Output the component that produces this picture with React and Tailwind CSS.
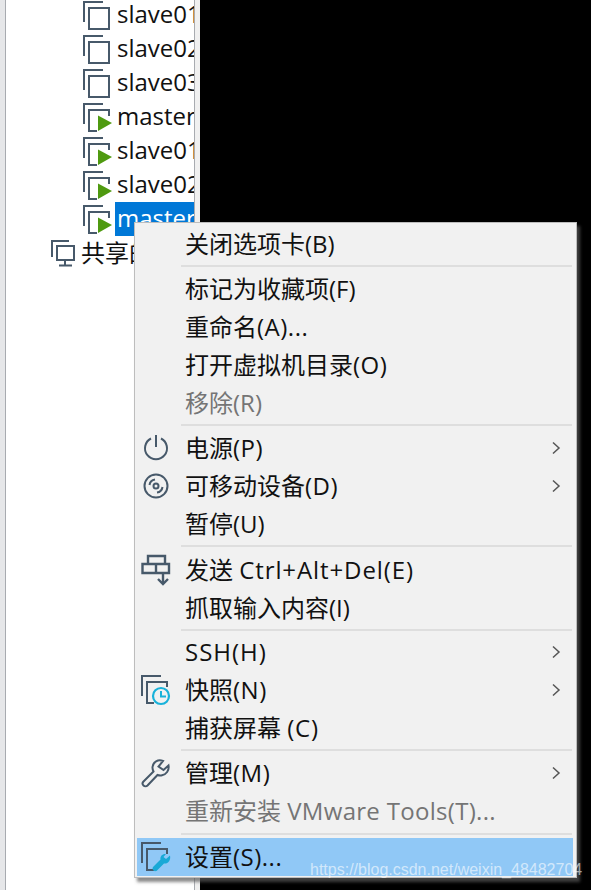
import React from "react";

const C = "#47596a";
const FONT = "font-['Open_Sans','Noto_Sans_CJK_SC',sans-serif]";

function VmIcon({ running }) {
  return (
    <svg width="30" height="32" viewBox="0 0 30 32" fill="none" className="shrink-0">
      <path d="M2 23V3H21" stroke={C} strokeWidth="2" />
      {running ? (
        <>
          <path d="M15 30H7V9H27V15" stroke={C} strokeWidth="2" />
          <path d="M16 14.5L30 22L16 30Z" fill="#4f9a10" />
        </>
      ) : (
        <path d="M7 9H27V30H7Z" stroke={C} strokeWidth="2" />
      )}
    </svg>
  );
}

function TreeRow({ name, running, selected }) {
  return (
    <div className="flex h-[34px] items-center pl-[76px] overflow-hidden">
      <VmIcon running={running} />
      <div className={`ml-[3px] flex-1 h-[34px] pl-[2px] leading-[31px] whitespace-nowrap overflow-hidden ${selected ? "bg-[#0078d7] text-white" : "text-[#111]"}`}>
        {name}
      </div>
    </div>
  );
}

function Chevron() {
  return (
    <svg width="10" height="14" viewBox="0 0 10 14" fill="none" className="absolute right-[12px] top-[12px]">
      <path d="M2 1.5L8 7L2 12.5" stroke="#555" strokeWidth="1.5" />
    </svg>
  );
}

function Item({ label, icon, arrow, disabled, active }) {
  return (
    <div className={`relative flex h-[38px] items-center whitespace-nowrap ${active ? "bg-[#90c8f6]" : ""} ${disabled ? "text-[#757575]" : "text-[#111]"}`}>
      <div className="flex w-[44px] shrink-0 items-center justify-center pr-[6px]">{icon}</div>
      <div className="pl-[4px] leading-[38px]">{label}</div>
      {arrow && <Chevron />}
    </div>
  );
}

function Sep({ cls }) {
  return <div className={`ml-[44px] mr-[1px] h-[2px] bg-[#dedede] ${cls}`} />;
}

function L({ children }) {
  return <span className="tracking-[0.5px]">{children}</span>;
}

const PowerIcon = (
  <svg width="28" height="28" viewBox="0 0 28 28" fill="none" stroke={C} strokeWidth="2">
    <path d="M9 4.5A11 11 0 1 0 19 4.5" />
    <path d="M14 1V13" />
  </svg>
);

const DiscIcon = (
  <svg width="28" height="28" viewBox="0 0 28 28" fill="none" stroke={C} strokeWidth="2">
    <circle cx="14" cy="14" r="11.5" />
    <circle cx="14" cy="14" r="2.5" />
    <path d="M7.5 13A6.5 6.5 0 0 1 13 7.5" />
    <path d="M20.5 15A6.5 6.5 0 0 1 15 20.5" />
  </svg>
);

const SendIcon = (
  <svg width="30" height="32" viewBox="0 0 30 32" fill="none" stroke={C} strokeWidth="2.4" className="-mt-[1px]">
    <path d="M7 10V2H24V10" />
    <path d="M1.5 10H28V19H1.5Z" />
    <path d="M15 10V19" />
    <path d="M22 19V30" />
    <path d="M17 25L22 30L27 25" />
  </svg>
);

const SnapshotIcon = (
  <svg width="32" height="32" viewBox="0 0 32 32" fill="none">
    <path d="M2 22V2H21" stroke={C} strokeWidth="2" />
    <path d="M14 29H7V8H27V13" stroke={C} strokeWidth="2" />
    <circle cx="21" cy="22" r="8" stroke="#19b2da" strokeWidth="2.2" fill="#f1f1f1" />
    <path d="M21 17V22.5H26" stroke="#19b2da" strokeWidth="2" />
  </svg>
);

const WrenchIcon = (
  <svg width="30" height="30" viewBox="0 0 30 30" fill="none" stroke={C} strokeWidth="2">
    <path d="M27.5 7.5L22.5 12L17.5 8.5L22 3C17 1 12 4 11.5 9C11.3 11 12 12.5 12.5 13.5L2.5 23.5C1 25 1.5 26.5 2.5 27.5C3.5 28.5 5.5 28.5 6.5 27.5L16.5 17C18 17.5 19.5 17.7 21 17.3C25 16.5 28.5 12.5 27.5 7.5Z" />
  </svg>
);

const SettingsIcon = (
  <svg width="32" height="32" viewBox="0 0 32 32" fill="none">
    <path d="M2 22V2H21" stroke={C} strokeWidth="2" />
    <path d="M14 29H7V8H27V13" stroke={C} strokeWidth="2" />
    <path d="M30 14.5L26 18L23.5 16L26 13C22.5 12.5 20 15 20.5 18.5L13.5 25.5C12 27 12.5 28.5 13.5 29.5C14.5 30.5 16.5 30.5 17.5 29L24 22.5C28 23 31 19.5 30 14.5Z" fill="#19a9d6" />
  </svg>
);

export default function App() {
  return (
    <div className={`relative flex h-[890px] w-[591px] overflow-hidden bg-black text-[24px] ${FONT}`}>
      <div className="w-[5px] shrink-0 bg-[#e6e7e9]" />
      <div className="w-[189px] shrink-0 overflow-hidden border-l border-[#a8abb0] bg-white">
        <div className="-mt-[2px]">
          <TreeRow name="slave01" />
          <TreeRow name="slave02" />
          <TreeRow name="slave03" />
          <TreeRow name="master" running />
          <TreeRow name="slave01" running />
          <TreeRow name="slave02" running />
          <TreeRow name="master" running selected />
          <div className="flex h-[34px] items-center pl-[44px]">
            <svg width="26" height="30" viewBox="0 0 26 30" fill="none" stroke={C} strokeWidth="2" className="shrink-0">
              <path d="M2 19V3H19" />
              <path d="M7 8H24V22H7Z" />
              <path d="M15 22V27M9 27.5H22" />
            </svg>
            <span className="ml-[5px] whitespace-nowrap text-[#111]">共享的虚拟机</span>
          </div>
        </div>
      </div>
      <div className="w-[6px] shrink-0 border-l border-[#a8abb0] bg-[#f0f0f0]" />

      <div className="absolute left-[134px] top-[222px] w-[443px] border border-[#bdbdbd] bg-[#f1f1f1] pl-[2px] pr-[3px] pt-[2px] shadow-[3px_4px_3px_rgba(90,90,90,0.7)]">
        <Item label="关闭选项卡(B)" />
        <Sep cls="mt-[2px] mb-[3px]" />
        <Item label="标记为收藏项(F)" />
        <Item label={<>重命名<L>(A)...</L></>} />
        <Item label={<>打开虚拟机目录<L>(O)</L></>} />
        <Item label="移除(R)" disabled />
        <Sep cls="mt-[2px] mb-[3px]" />
        <Item label={<>电源<L>(P)</L></>} icon={PowerIcon} arrow />
        <Item label={<>可移动设备<L>(D)</L></>} icon={DiscIcon} arrow />
        <Item label="暂停(U)" />
        <Sep cls="mt-[2px] mb-[4px]" />
        <Item label={<>发送 <span className="tracking-[0.9px]">Ctrl+Alt+Del(E)</span></>} icon={SendIcon} />
        <Item label="抓取输入内容(I)" />
        <Sep cls="mt-[2px] mb-[2px]" />
        <Item label={<span className="tracking-[1px]">SSH(H)</span>} arrow />
        <Item label={<>快照<L>(N)</L></>} icon={SnapshotIcon} arrow />
        <Item label={<>捕获屏幕 <span className="tracking-[0.8px]">(C)</span></>} />
        <Sep cls="mt-[2px] mb-[3px]" />
        <Item label={<>管理<L>(M)</L></>} icon={WrenchIcon} arrow />
        <Item label={<>重新安装 <span className="tracking-[0.3px]">VMware Tools(T)...</span></>} disabled />
        <Sep cls="mt-[3px] mb-[3px]" />
        <Item label={<>设置<L>(S)...</L></>} icon={SettingsIcon} active />
        <div className="h-[1px]" />
      </div>

      <div className="absolute left-[310px] top-[860px] whitespace-nowrap font-['Liberation_Sans',sans-serif] text-[16px] leading-[20px] text-white/60">
        https://blog.csdn.net/weixin_48482704
      </div>
    </div>
  );
}
